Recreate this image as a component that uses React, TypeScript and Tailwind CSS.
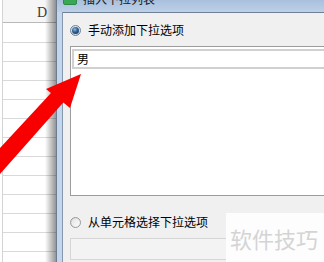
import React from "react";

const cjk = { fontFamily: '"Noto Sans CJK SC", "Noto Sans", sans-serif' };

function RadioOn() {
  return (
    <div className="w-[11px] h-[11px] rounded-full border border-[#6f8092] bg-gradient-to-b from-[#e4e8ec] to-[#c9d0d8] flex items-center justify-center shrink-0">
      <div className="w-[7px] h-[7px] rounded-full bg-[radial-gradient(circle_at_40%_35%,#8fb8e0_0%,#2c5f93_45%,#132c4a_100%)]" />
    </div>
  );
}

function RadioOff() {
  return (
    <div className="w-[11px] h-[11px] rounded-full border border-[#9a9a9a] bg-gradient-to-br from-[#d4d4d4] to-[#fbfbfb] flex items-center justify-center shrink-0">
      <div className="w-[7px] h-[7px] rounded-full bg-gradient-to-br from-[#e6e6e6] to-[#fafafa]" />
    </div>
  );
}

export default function App() {
  const rows = Array.from({ length: 12 });
  return (
    <div className="relative w-[324px] h-[262px] overflow-hidden bg-white flex" style={cjk}>
      {/* spreadsheet */}
      <div className="relative w-[56px] h-full bg-white shrink-0">
        <div className="ml-[2px] h-full border-l border-[#d4d4d4] flex flex-col">
          <div className="h-[23px] border-b border-[#b9b9b9] bg-[#f6f6f6] relative shrink-0">
            <span
              className="absolute left-[34px] top-[5px] text-[14px] leading-[16px] text-[#3c3c3c]"
              style={{ fontFamily: '"Liberation Serif", serif' }}
            >
              D
            </span>
          </div>
          <div className="h-[20px] border-b border-[#d9d9d9] shrink-0" />
          {rows.map((_, i) => (
            <div key={i} className="h-[19px] border-b border-[#d9d9d9] shrink-0" />
          ))}
        </div>
        <div className="absolute right-0 top-0 h-full w-[11px] bg-gradient-to-r from-[rgba(0,0,0,0)] to-[rgba(0,0,0,0.42)]" />
      </div>

      {/* dialog */}
      <div className="flex-1 flex flex-col h-full border-l border-[#6c7b8d]">
        <div className="h-[12px] shrink-0 bg-gradient-to-b from-[#a9c0dd] to-[#bdd0e8] flex items-end overflow-hidden">
          <div className="ml-[6px] w-[14px] h-[10px] mb-[7px] rounded-[2px] bg-[#3aa757] border border-[#2b8a44] shrink-0" />
          <span className="ml-[6px] mb-[7px] text-[12px] leading-[12px] text-[#1a1a1a] whitespace-nowrap">
            插入下拉列表
          </span>
        </div>
        <div className="flex-1 flex">
          <div className="w-[5px] bg-[#c3d6ee] border-r border-[#8797ab] box-content shrink-0" />
          <div className="flex-1 bg-[#f0f0f0] border-t border-[#6f7f94] flex flex-col pl-[7px]">
            <div className="mt-[9px] h-[16px] flex items-center">
              <RadioOn />
              <span className="ml-[7px] text-[12px] leading-[16px] text-black whitespace-nowrap">手动添加下拉选项</span>
            </div>
            <div className="mt-[8px] h-[150px] border border-r-0 border-[#9c9c9c] bg-white shrink-0 flex flex-col">
              <div className="mt-[2px] ml-[1px] h-[20px] border-t-2 border-b-2 border-l-2 border-[#d0d0d0] flex items-center pl-[3px]">
                <span className="text-[12px] leading-[14px] text-black">男</span>
              </div>
            </div>
            <div className="mt-[18px] h-[16px] flex items-center">
              <RadioOff />
              <span className="ml-[7px] text-[12px] leading-[16px] text-black whitespace-nowrap">从单元格选择下拉选项</span>
            </div>
            <div className="mt-[8px] h-[22px] border border-r-0 border-[#d6d6d6] bg-[#f3f3f3] shrink-0" />
          </div>
        </div>
      </div>

      {/* watermark */}
      <div className="absolute left-[226px] top-[213px] w-[98px] h-[49px] bg-[#fdfdfd] flex items-center pl-[4px]">
        <span className="text-[22px] leading-[24px] text-[#d4d4d4] whitespace-nowrap">软件技巧</span>
      </div>

      {/* red arrow */}
      <svg className="absolute left-0 top-0" width="324" height="262" viewBox="0 0 324 262">
        <polygon
          points="81,74 70,108 63.3,102.5 -10,185.3 -10,158.8 51,92.9 46,89"
          fill="#f80000"
        />
      </svg>
    </div>
  );
}
